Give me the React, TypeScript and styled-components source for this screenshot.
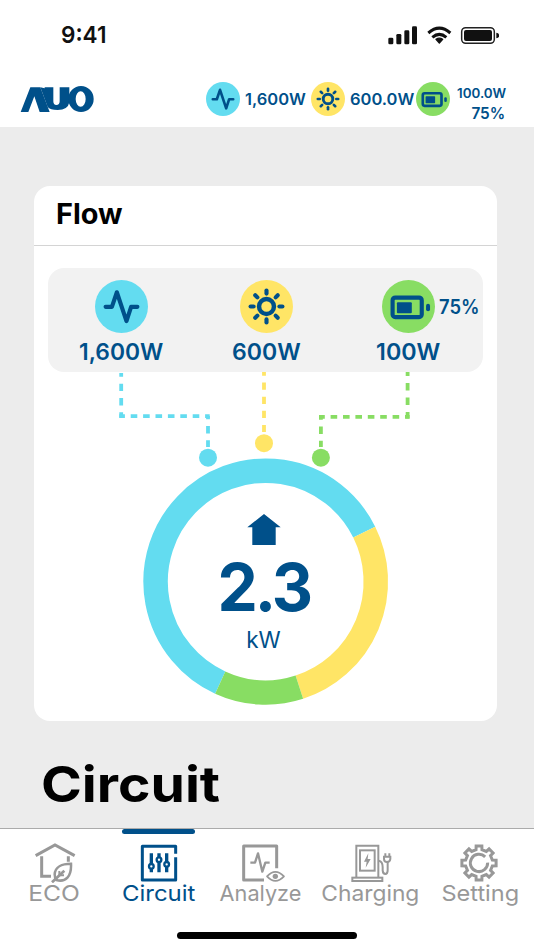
import React from "react";
import styled, { createGlobalStyle } from "styled-components";

const NAVY = "#00508a";
const SKY = "#63dcf0";
const SUN = "#ffe566";
const LEAF = "#88dd63";
const MUTED = "#989898";

const GlobalStyle = createGlobalStyle`
  * { box-sizing: border-box; }
  body { margin: 0; background: #fff; font-family: Inter, "Liberation Sans", sans-serif; }
`;

const Screen = styled.div`
  width: 534px;
  height: 950px;
  display: flex;
  flex-direction: column;
  overflow: hidden;
  background: #ececec;
`;

/* A single line of text; cap height is centred in the line box. */
const Label = styled.span<{
  $size: number;
  $line: number;
  $weight?: number;
  $track?: number;
  $color?: string;
  $stretch?: number;
  $origin?: string;
}>`
  display: block;
  flex: none;
  width: max-content;
  white-space: nowrap;
  font-size: ${(p) => p.$size}px;
  line-height: ${(p) => p.$line}px;
  font-weight: ${(p) => p.$weight ?? 600};
  letter-spacing: ${(p) => p.$track ?? 0}px;
  color: ${(p) => p.$color ?? NAVY};
  transform: scaleX(${(p) => p.$stretch ?? 1});
  transform-origin: ${(p) => p.$origin ?? "left"} center;
`;

const StatusBar = styled.div`
  flex: none;
  height: 70px;
  padding: 0 35px 0 61px;
  background: #fff;
  display: flex;
  align-items: center;
  justify-content: space-between;
`;

const Header = styled.header`
  flex: none;
  height: 57px;
  padding: 0 0 0 20px;
  background: #fff;
  display: flex;
  align-items: center;
`;

const Metrics = styled.div`
  display: flex;
  align-items: center;
  margin-left: 111px;
`;

const Metric = styled.div<{ $width: number; $gap: number }>`
  width: ${(p) => p.$width}px;
  display: flex;
  align-items: center;
  gap: ${(p) => p.$gap}px;
`;

const Stack = styled.div`
  width: 48px;
  display: flex;
  flex-direction: column;
  padding-top: 11px;
`;

const StackEnd = styled.div`
  align-self: flex-end;
`;

const Content = styled.main`
  flex: 1;
  padding: 59px 37px 0 34px;
`;

const Card = styled.section`
  height: 535px;
  background: #fff;
  border-radius: 16px;
  overflow: hidden;
  display: flex;
  flex-direction: column;
`;

const CardHead = styled.div`
  flex: none;
  height: 60px;
  padding: 7px 22px 0;
  border-bottom: 1px solid #d4d4d4;
`;

const Sources = styled.div`
  flex: none;
  height: 104px;
  margin: 22px 14px 0;
  padding: 12px 0 0;
  border-radius: 16px;
  background: #f2f2f2;
  display: grid;
  grid-template-columns: 146px 144px 140px;
`;

const Source = styled.div`
  display: flex;
  flex-direction: column;
  align-items: center;
  gap: 5px;
`;

const BadgeRow = styled.div`
  position: relative;
  height: 53px;
`;

const Beside = styled.div`
  position: absolute;
  left: 57px;
  top: 15px;
`;

const Chart = styled.div`
  position: relative;
  flex: 1;
`;

const Reading = styled.div`
  position: absolute;
  inset: 182px 4px auto 0;
  display: flex;
  flex-direction: column;
  align-items: center;
`;

const Title = styled.h1`
  margin: 31px 0 0 7px;
`;

const Nav = styled.nav`
  flex: none;
  height: 122px;
  background: #fff;
  border-top: 1px solid #ababab;
  display: flex;
  flex-direction: column;
  align-items: center;
  justify-content: space-between;
  padding-bottom: 11px;
`;

const Tabs = styled.div`
  align-self: stretch;
  display: grid;
  grid-template-columns: 109px 99px 104px 117px 102px;
`;

const Tab = styled.div`
  display: flex;
  flex-direction: column;
  align-items: center;
`;

const Indicator = styled.div<{ $on?: boolean }>`
  width: 73px;
  height: 5px;
  border-radius: 2.5px;
  background: ${(p) => (p.$on ? NAVY : "transparent")};
  margin-bottom: 9px;
`;

const HomeBar = styled.div`
  width: 180px;
  height: 7px;
  border-radius: 4px;
  background: #000;
`;

type Kind = "pulse" | "sun" | "battery";

function Badge({ kind, size }: { kind: Kind; size: number }) {
  const fill = { pulse: SKY, sun: SUN, battery: LEAF }[kind];
  return (
    <svg width={size} height={size} viewBox="0 0 160 160">
      <circle cx="80" cy="80" r="80" fill={fill} />
      <g fill="none" stroke={NAVY} strokeWidth="12.5" strokeLinecap="round" strokeLinejoin="round">
        {kind === "pulse" && <path d="M32 81H51L66 37L95 124L109 81H128" />}
        {kind === "sun" && (
          <>
            <circle cx="80" cy="80" r="22.5" strokeWidth="13.5" />
            {[0, 45, 90, 135, 180, 225, 270, 315].map((a) => (
              <path key={a} d="M80 32V41" transform={`rotate(${a} 80 80)`} />
            ))}
          </>
        )}
        {kind === "battery" && (
          <>
            <rect x="32" y="53" width="88" height="59" rx="8" />
            <rect x="45" y="67" width="45" height="33" rx="3" fill={NAVY} stroke="none" />
            <rect x="133" y="72" width="12" height="22" rx="6" fill={NAVY} stroke="none" />
          </>
        )}
      </g>
    </svg>
  );
}

function StatusIcons() {
  return (
    <svg width="112" height="22" viewBox="-2 3 336 66">
      <g fill="#111">
        <rect x="2" y="44" width="15" height="20" rx="4" />
        <rect x="26" y="33" width="15" height="31" rx="4" />
        <rect x="50" y="22" width="15" height="42" rx="4" />
        <rect x="73" y="10" width="15" height="54" rx="4" />
        <path d="M145 49Q155 42 165 49L155 60Z" stroke="#111" strokeWidth="4" strokeLinejoin="round" />
        <rect x="229" y="21" width="84" height="33" rx="6" />
        <path d="M326 29Q335 31 335 37Q335 44 326 46Z" />
      </g>
      <g fill="none" stroke="#111" strokeWidth="9">
        <path d="M122 30Q155 1 188 30" />
        <path d="M134 43Q155 25 176 43" />
      </g>
      <rect x="222" y="14" width="98" height="47" rx="12" fill="none" stroke="#222" strokeWidth="4.5" />
    </svg>
  );
}

function Logo() {
  return (
    <svg width="75" height="28" viewBox="60 258 225 84" fill={NAVY}>
      <path d="M62 339L91 265H121L149 339H119L103 292L85 339Z" />
      <path d="M121 265L134 268V265H160V307Q160 318 169 318Q179 318 179 307V265H208V310Q204 333 173 333Q150 333 143 324Z" />
      <path fillRule="evenodd" d="M243 261A38 39 0 1 0 243 339A38 39 0 1 0 243 261ZM242 277A15 23 0 1 1 242 323A15 23 0 1 1 242 277Z" />
    </svg>
  );
}

/* Ring sector boundaries, degrees clockwise from twelve o'clock. */
const SECTORS = [
  { from: 204.4, to: 423.5, color: SKY },
  { from: 63.5, to: 162.2, color: SUN },
  { from: 162.2, to: 204.4, color: LEAF },
];

function arc(from: number, to: number) {
  const at = (deg: number) => {
    const r = (deg * Math.PI) / 180;
    return `${(231.7 + 110.1 * Math.sin(r)).toFixed(2)} ${(209.6 - 110.9 * Math.cos(r)).toFixed(2)}`;
  };
  return `M${at(from)}A110.1 110.9 0 ${to - from > 180 ? 1 : 0} 1 ${at(to)}`;
}

function FlowChart() {
  return (
    <svg width="463" height="349" viewBox="0 0 463 349" fill="none">
      <g strokeWidth="3.8">
        <g stroke={SKY}>
          <path d="M87.2 1V45.7" strokeDasharray="7.4 6.9" strokeDashoffset="3.6" />
          <path d="M85.3 44.2H175.7" strokeDasharray="6.6 5.8" strokeDashoffset="1" />
          <path d="M174 44V75" strokeDasharray="7.6 6.7" strokeDashoffset="4.4" />
        </g>
        <path d="M230 0V61" stroke={SUN} strokeDasharray="7.2 6.9" strokeDashoffset="3.5" />
        <g stroke={LEAF}>
          <path d="M373.6 0V46.5" strokeDasharray="7.6 6.9" strokeDashoffset="3.6" />
          <path d="M375.6 44.8H285.2" strokeDasharray="6.6 5.8" strokeDashoffset="2" />
          <path d="M286.9 43V75" strokeDasharray="7.6 6.7" strokeDashoffset="2.8" />
        </g>
      </g>
      <circle cx="174" cy="85.7" r="9" fill={SKY} />
      <circle cx="230" cy="71.2" r="9" fill={SUN} />
      <circle cx="286.9" cy="85.7" r="9" fill={LEAF} />
      {SECTORS.map((s) => (
        <path key={s.color} d={arc(s.from, s.to)} stroke={s.color} strokeWidth="24.5" />
      ))}
      <path d="M230 142L246.7 155.3H241.7V173H218.3V155.3H213.3Z" fill={NAVY} />
    </svg>
  );
}

function gearPath() {
  const pts: string[] = [];
  for (let i = 0; i < 8; i++) {
    const base = i * 45;
    [[-12.5, 41], [-9.5, 52], [9.5, 52], [12.5, 41]].forEach(([d, r]) => {
      const a = ((base + d) * Math.PI) / 180;
      pts.push(`${(60 + r * Math.sin(a)).toFixed(1)} ${(60 - r * Math.cos(a)).toFixed(1)}`);
    });
  }
  return `M${pts.join("L")}Z`;
}

function EcoIcon() {
  return (
    <svg width="44" height="40" viewBox="98 70 132 120" fill="none" stroke={MUTED} strokeWidth="9">
      <path d="M106 108L164 76L223 108" />
      <path d="M124 110V170H152M204 110V126" />
      <path d="M212 132C185 132 164 142 163 164Q163 174 168 181C196 189 214 170 212 132Z" strokeWidth="7.5" />
      <path d="M155 188L192 153" strokeWidth="8" />
      <path d="M177 154V167H191" strokeWidth="6" />
    </svg>
  );
}

function CircuitIcon() {
  return (
    <svg width="44" height="40" viewBox="410 70 132 120" fill="none" stroke={NAVY} strokeWidth="9" strokeLinejoin="round">
      <path d="M526 102V80H426V181H526V113" />
      <path d="M453 101V158M476 101V158M499 101V158" strokeWidth="10" />
      <g fill="#fff" strokeWidth="7">
        <circle cx="453" cy="140" r="7" />
        <circle cx="476" cy="120" r="7" />
        <circle cx="499" cy="134" r="7" />
      </g>
    </svg>
  );
}

function AnalyzeIcon() {
  return (
    <svg width="46" height="40" viewBox="122 70 138 120" fill="none" stroke={MUTED} strokeWidth="9" strokeLinejoin="round">
      <path d="M232 146V79H133V181H194" />
      <path d="M153 129H167L176 101L189 156L198 129H211" strokeWidth="7" />
      <path d="M203 170Q228 143 254 170Q228 197 203 170Z" strokeWidth="5" />
      <circle cx="228" cy="170" r="8" fill={MUTED} stroke="none" />
    </svg>
  );
}

function ChargingIcon() {
  return (
    <svg width="44" height="40" viewBox="-42 70 132 120" fill="none" stroke={MUTED} strokeWidth="6">
      <path d="M-23 174V78H43V174" />
      <rect x="-35" y="174" width="90" height="10" />
      <rect x="-12" y="92" width="44" height="61" />
      <path d="M13 101L0 126H8L5 144L20 118H11Z" fill={MUTED} stroke="none" />
      <path d="M44 123Q56 125 56 142V152Q57 163 64 163Q71 163 71 152V127" />
      <path d="M60 111H79V118Q78 127 69 127Q60 127 60 118ZM64 101V111M76 101V111" />
    </svg>
  );
}

function SettingIcon() {
  return (
    <svg width="40" height="40" viewBox="0 0 120 120" fill="none" stroke={MUTED} strokeWidth="9">
      <path d={gearPath()} />
      <path d="M78.5 41.5A26 26 0 1 0 86 59" />
    </svg>
  );
}

const IconSlot = styled.div<{ $nudge: number }>`
  display: flex;
  margin-left: ${(p) => p.$nudge}px;
`;

const TABS = [
  { text: "ECO", icon: <EcoIcon />, stretch: 1.12, nudge: 0 },
  { text: "Circuit", icon: <CircuitIcon />, on: true, stretch: 1.09, nudge: 0 },
  { text: "Analyze", icon: <AnalyzeIcon />, stretch: 0.985, nudge: 6 },
  { text: "Charging", icon: <ChargingIcon />, stretch: 1.035, nudge: 2 },
  { text: "Setting", icon: <SettingIcon />, stretch: 1.07, nudge: -2 },
];

export default function App() {
  return (
    <Screen>
      <GlobalStyle />
      <StatusBar>
        <Label $size={23.5} $line={30} $color="#111" $stretch={0.96}>9:41</Label>
        <StatusIcons />
      </StatusBar>
      <Header>
        <Logo />
        <Metrics>
          <Metric $width={104.5} $gap={5}>
            <Badge kind="pulse" size={34} />
            <Label $size={16} $line={20} $stretch={1.03}>1,600W</Label>
          </Metric>
          <Metric $width={105.5} $gap={5.5}>
            <Badge kind="sun" size={34} />
            <Label $size={16} $line={20} $stretch={1.03}>600.0W</Label>
          </Metric>
          <Metric $width={92} $gap={7}>
            <Badge kind="battery" size={34} />
            <Stack>
              <Label $size={12.6} $line={18} $stretch={1.06}>100.0W</Label>
              <StackEnd>
                <Label $size={16} $line={20} $stretch={0.96} $origin="right">75%</Label>
              </StackEnd>
            </Stack>
          </Metric>
        </Metrics>
      </Header>
      <Content>
        <Card>
          <CardHead>
            <Label $size={28} $line={42} $weight={700} $color="#000" $stretch={1.03}>Flow</Label>
          </CardHead>
          <Sources>
            <Source>
              <Badge kind="pulse" size={53} />
              <Label $size={22.6} $line={27} $stretch={1.01}>1,600W</Label>
            </Source>
            <Source>
              <Badge kind="sun" size={53} />
              <Label $size={22.6} $line={27} $stretch={1.02}>600W</Label>
            </Source>
            <Source>
              <BadgeRow>
                <Badge kind="battery" size={53} />
                <Beside>
                  <Label $size={19.6} $line={24} $stretch={0.94}>75%</Label>
                </Beside>
              </BadgeRow>
              <Label $size={22.6} $line={27} $stretch={1.03} $origin="center">100W</Label>
            </Source>
          </Sources>
          <Chart>
            <FlowChart />
            <Reading>
              <Label $size={66} $line={66} $weight={700} $track={-3} $stretch={0.97} $origin="center">2.3</Label>
              <Label $size={22.5} $line={40} $weight={400}>kW</Label>
            </Reading>
          </Chart>
        </Card>
        <Title>
          <Label $size={50} $line={64} $weight={700} $color="#000" $stretch={1.105}>Circuit</Label>
        </Title>
      </Content>
      <Nav>
        <Tabs>
          {TABS.map((t) => (
            <Tab key={t.text}>
              <Indicator $on={t.on} />
              <IconSlot $nudge={t.nudge}>{t.icon}</IconSlot>
              <Label
                $size={22}
                $line={21}
                $weight={400}
                $stretch={t.stretch}
                $origin="center"
                $color={t.on ? NAVY : MUTED}
              >
                {t.text}
              </Label>
            </Tab>
          ))}
        </Tabs>
        <HomeBar />
      </Nav>
    </Screen>
  );
}
